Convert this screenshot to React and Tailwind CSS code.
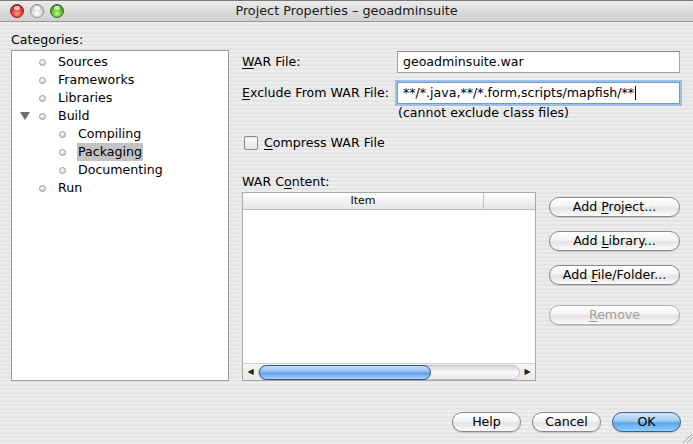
import React from "react";

const U = ({ children }) => <span className="underline underline-offset-2">{children}</span>;

function AquaButton({ children, className = "", disabled = false, primary = false }) {
  const base = primary
    ? "border-[#3a5f94] bg-[linear-gradient(to_bottom,#d3e9fb_0%,#9cccf3_45%,#5ea5e8_55%,#8fd0ff_100%)] text-black"
    : "border-[#8a8a8a] bg-[linear-gradient(to_bottom,#ffffff_0%,#f4f4f4_45%,#e3e3e3_55%,#fbfbfb_100%)]";
  return (
    <div
      className={`h-[20px] rounded-full border flex items-center justify-center text-[12.6px] leading-none shadow-[0_1px_1px_rgba(0,0,0,0.15)] ${base} ${
        disabled ? "text-[#a0a0a0] border-[#b0b0b0]" : "text-black"
      } ${className}`}
    >
      <span className="whitespace-pre">{children}</span>
    </div>
  );
}

function Bullet() {
  return (
    <span className="inline-block w-[7px] h-[7px] rounded-full border border-[#9a9a9a] bg-[radial-gradient(circle_at_40%_35%,#ffffff_0%,#dcdcdc_60%,#b8b8b8_100%)]" />
  );
}

function TreeRow({ level, label, selected, expanded }) {
  return (
    <div className="h-[18px] flex items-center relative">
      {expanded && (
        <span className="absolute left-[8px] top-[5px] w-0 h-0 border-l-[5px] border-r-[5px] border-t-[8px] border-l-transparent border-r-transparent border-t-[#6e6e6e]" />
      )}
      <div className={`flex items-center ${level === 1 ? "pl-[27px]" : "pl-[47px]"}`}>
        <Bullet />
        <span
          className={`ml-[11px] px-[1px] h-[18px] leading-[18px] ${selected ? "bg-[#c3c3c3]" : ""}`}
        >
          {label}
        </span>
      </div>
    </div>
  );
}

function Light({ color }) {
  const bg = {
    red: "bg-[radial-gradient(circle_at_50%_70%,#ff9a8c_0%,#e0443e_45%,#a3130f_100%)] border-[#8c1a16]",
    gray: "bg-[radial-gradient(circle_at_50%_70%,#ffffff_0%,#d9d9d9_50%,#a9a9a9_100%)] border-[#8f8f8f]",
    green: "bg-[radial-gradient(circle_at_50%_70%,#c8f58a_0%,#62c22c_45%,#2f7a10_100%)] border-[#2b6512]",
  }[color];
  return (
    <div className={`w-[14px] h-[14px] rounded-full border relative ${bg}`}>
      <div className="absolute left-[3px] top-[1px] w-[6px] h-[4px] rounded-full bg-white/70" />
    </div>
  );
}

export default function App() {
  return (
    <div
      className="w-[693px] h-[444px] overflow-hidden flex flex-col text-black text-[12.6px] relative"
      style={{ fontFamily: '"DejaVu Sans", "Lucida Grande", sans-serif' }}
    >
      {/* Title bar */}
      <div className="h-[22px] shrink-0 flex items-center border-b border-[#9a9a9a] border-t border-t-[#7a7a7a] bg-[linear-gradient(to_bottom,#ececec_0%,#dcdcdc_50%,#cfcfcf_100%)] relative">
        <div className="flex items-center gap-[6px] pl-[10px]">
          <Light color="red" />
          <Light color="gray" />
          <Light color="green" />
        </div>
        <div className="absolute inset-0 flex items-center justify-center text-[12.8px] text-[#1a1a1a]">
          Project Properties – geoadminsuite
        </div>
      </div>

      {/* Body */}
      <div className="flex-1 flex flex-col bg-[repeating-linear-gradient(to_bottom,#ededed_0px,#ededed_2px,#e5e5e5_2px,#e5e5e5_4px)]">
        <div className="flex">
          {/* Left column */}
          <div className="pl-[11px] pt-[10px] w-[229px] shrink-0">
            <div className="h-[16px] leading-[16px]">Categories:</div>
            <div className="mt-[2px] h-[331px] w-[218px] bg-white border border-[#9c9c9c] pt-[2px]">
              <TreeRow level={1} label="Sources" />
              <TreeRow level={1} label="Frameworks" />
              <TreeRow level={1} label="Libraries" />
              <TreeRow level={1} label="Build" expanded />
              <TreeRow level={2} label="Compiling" />
              <TreeRow level={2} label="Packaging" selected />
              <TreeRow level={2} label="Documenting" />
              <TreeRow level={1} label="Run" />
            </div>
          </div>

          {/* Right column */}
          <div className="pl-[13px] pt-[29px] w-[451px] flex flex-col">
            <div className="flex items-center h-[22px]">
              <div className="w-[156px] pt-[1px]">
                <U>W</U>AR File:
              </div>
              <div className="h-[22px] w-[285px] bg-white border border-[#a5a5a5] border-t-[#8a8a8a] flex items-center pl-[5px]">
                geoadminsuite.war
              </div>
            </div>
            <div className="flex items-center h-[22px] mt-[9px]">
              <div className="w-[156px]">
                <U>E</U>xclude From WAR File:
              </div>
              <div className="h-[22px] w-[285px] bg-white border border-[#6f9ad6] shadow-[0_0_0_2px_#9dbfe9] flex items-center pl-[5px]">
                **/*.java,**/*.form,scripts/mapfish/**
                <span className="inline-block w-[1px] h-[14px] bg-black ml-[1px]" />
              </div>
            </div>
            <div className="pl-[156px] h-[16px] leading-[16px] mt-[1px]">(cannot exclude class files)</div>

            <div className="flex items-center h-[16px] mt-[14px]">
              <span className="w-[14px] h-[14px] ml-[2px] rounded-[2px] border border-[#8a8a8a] bg-[linear-gradient(to_bottom,#ffffff,#e6e6e6)] shadow-[inset_0_1px_1px_rgba(0,0,0,0.1)]" />
              <span className="ml-[6px]">
                <U>C</U>ompress WAR File
              </span>
            </div>

            <div className="h-[16px] leading-[16px] mt-[23px]">
              WAR C<U>o</U>ntent:
            </div>

            <div className="flex mt-[2px]">
              {/* Table */}
              <div className="w-[294px] h-[189px] border border-[#a8a8a8] bg-white flex flex-col">
                <div className="h-[17px] flex border-b border-[#b8b8b8] bg-[linear-gradient(to_bottom,#ffffff_0%,#f2f2f2_50%,#e6e6e6_100%)] text-[11px]">
                  <div className="w-[241px] border-r border-[#c4c4c4] flex items-center justify-center">Item</div>
                  <div className="flex-1" />
                </div>
                <div className="flex-1" />
                <div className="h-[17px] flex items-center bg-[linear-gradient(to_bottom,#f4f4f4,#e9e9e9)] border-t border-[#d0d0d0]">
                  <span className="w-[15px] flex justify-center text-[8px] text-[#222]">◀</span>
                  <div className="flex-1 h-[15px] rounded-full bg-[linear-gradient(to_bottom,#d8d8d8,#f8f8f8_50%,#e8e8e8)] border border-[#c0c0c0] flex items-center">
                    <div className="w-[172px] h-[15px] rounded-full border border-[#2a5491] bg-[linear-gradient(to_bottom,#c7e0fb_0%,#8ebcf0_45%,#5f9de6_55%,#a6d4ff_100%)]" />
                  </div>
                  <span className="w-[15px] flex justify-center text-[8px] text-[#222]">▶</span>
                </div>
              </div>

              {/* Buttons */}
              <div className="ml-[13px] w-[131px] flex flex-col pt-[5px]">
                <AquaButton>
                  Add <U>P</U>roject...
                </AquaButton>
                <AquaButton className="mt-[14px]">
                  Add <U>L</U>ibrary...
                </AquaButton>
                <AquaButton className="mt-[14px]">
                  Add <U>F</U>ile/Folder...
                </AquaButton>
                <AquaButton className="mt-[20px]" disabled>
                  <U>R</U>emove
                </AquaButton>
              </div>
            </div>
          </div>
        </div>

        {/* Bottom buttons */}
        <div className="flex justify-end gap-[11px] pr-[12px] mt-[31px]">
          <AquaButton className="w-[69px]">Help</AquaButton>
          <AquaButton className="w-[69px]">Cancel</AquaButton>
          <AquaButton className="w-[69px]" primary>
            OK
          </AquaButton>
        </div>
      </div>

      {/* resize grip */}
      <svg className="absolute right-0 bottom-0" width="12" height="12" viewBox="0 0 12 12">
        <line x1="11" y1="2" x2="2" y2="11" stroke="#9a9a9a" strokeWidth="1" />
        <line x1="11" y1="6" x2="6" y2="11" stroke="#9a9a9a" strokeWidth="1" />
        <line x1="11" y1="10" x2="10" y2="11" stroke="#9a9a9a" strokeWidth="1" />
      </svg>
    </div>
  );
}
